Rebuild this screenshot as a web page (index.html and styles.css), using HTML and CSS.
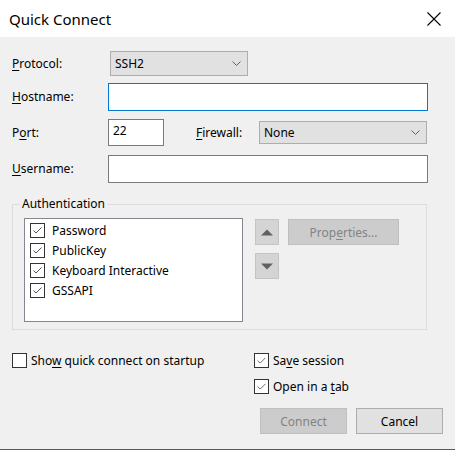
FILE: index.html
```html
<!DOCTYPE html>
<html>
<head>
<meta charset="utf-8">
<link rel="stylesheet" href="styles.css">
</head>
<body>
<div class="dialog">
  <div class="titlebar">
    <span class="title">Quick Connect</span>
    <svg class="close" width="14" height="14" viewBox="0 0 14 14"><path d="M0.5 0.5L13.5 13.5M13.5 0.5L0.5 13.5" stroke="#000" stroke-width="1.1" fill="none"/></svg>
  </div>
  <div class="main">
    <div class="row r-protocol">
      <span class="label"><u>P</u>rotocol:</span>
      <div class="combo combo-protocol"><span>SSH2</span><svg class="chev" width="9" height="5" viewBox="0 0 9 5"><path d="M0.5 0.5L4.5 4.5L8.5 0.5" stroke="#606060" fill="none"/></svg></div>
    </div>
    <div class="row r-host">
      <span class="label"><u>H</u>ostname:</span>
      <div class="input input-focus"></div>
    </div>
    <div class="row r-port">
      <span class="label">P<u>o</u>rt:</span>
      <div class="input input-port">22</div>
      <span class="label fw-label"><u>F</u>irewall:</span>
      <div class="combo combo-fw"><span>None</span><svg class="chev" width="9" height="5" viewBox="0 0 9 5"><path d="M0.5 0.5L4.5 4.5L8.5 0.5" stroke="#606060" fill="none"/></svg></div>
    </div>
    <div class="row r-user">
      <span class="label"><u>U</u>sername:</span>
      <div class="input"></div>
    </div>

    <fieldset class="group">
      <legend>Authentication</legend>
      <div class="group-body">
        <div class="listbox">
          <div class="item"><span class="cb"><svg width="13" height="13" viewBox="0 0 13 13"><path d="M2.5 6.5L5 9L10.5 3.5" stroke="#555" fill="none"/></svg></span><span>Password</span></div>
          <div class="item"><span class="cb"><svg width="13" height="13" viewBox="0 0 13 13"><path d="M2.5 6.5L5 9L10.5 3.5" stroke="#555" fill="none"/></svg></span><span>PublicKey</span></div>
          <div class="item"><span class="cb"><svg width="13" height="13" viewBox="0 0 13 13"><path d="M2.5 6.5L5 9L10.5 3.5" stroke="#555" fill="none"/></svg></span><span>Keyboard Interactive</span></div>
          <div class="item"><span class="cb"><svg width="13" height="13" viewBox="0 0 13 13"><path d="M2.5 6.5L5 9L10.5 3.5" stroke="#555" fill="none"/></svg></span><span>GSSAPI</span></div>
        </div>
        <div class="arrows">
          <div class="btn arrow-btn"><svg width="12" height="7" viewBox="0 0 12 7"><path d="M0 6.5L6 0.5L12 6.5Z" fill="#606060"/></svg></div>
          <div class="btn arrow-btn"><svg width="12" height="7" viewBox="0 0 12 7"><path d="M0 0.5L6 6.5L12 0.5Z" fill="#606060"/></svg></div>
        </div>
        <div class="btn btn-disabled btn-props"><span>Prop<u>e</u>rties...</span></div>
      </div>
    </fieldset>

    <div class="bottom">
      <div class="check"><span class="cb cb-lg"></span><span>Sho<u>w</u> quick connect on startup</span></div>
      <div class="right-col">
        <div class="check"><span class="cb cb-lg"><svg width="15" height="15" viewBox="0 0 15 15"><path d="M3 7.5L6 10.5L12 4.5" stroke="#555" fill="none"/></svg></span><span>Sa<u>v</u>e session</span></div>
        <div class="check check-tab"><span class="cb cb-lg"><svg width="15" height="15" viewBox="0 0 15 15"><path d="M3 7.5L6 10.5L12 4.5" stroke="#555" fill="none"/></svg></span><span>Open in a <u>t</u>ab</span></div>
        <div class="buttons">
          <div class="btn btn-disabled btn-main">Connect</div>
          <div class="btn btn-main">Cancel</div>
        </div>
      </div>
    </div>
  </div>
</div>
</body>
</html>
```

FILE: styles.css
```css
* { box-sizing: border-box; }
html, body { margin: 0; padding: 0; }
body {
  width: 455px;
  height: 450px;
  background: #f0f0f0;
  font-family: "Noto Sans", "DejaVu Sans", sans-serif;
  font-size: 12px;
  color: #000;
  overflow: hidden;
}
.dialog {
  height: 450px;
  border-bottom: 1px solid #5a5a5a;
  display: flex;
  flex-direction: column;
}
u { text-decoration-thickness: 1px; text-underline-offset: 2px; }
.titlebar {
  height: 37px;
  background: #fff;
  display: flex;
  align-items: center;
  justify-content: space-between;
  padding: 0 14px 0 9px;
}
.title { font-size: 15px; line-height: 20px; }
.close { display: block; margin-top: 1px; }
.main { padding: 0 12px; flex: 1; }
.row { display: flex; align-items: center; }
.label { width: 96px; flex: none; line-height: 16px; }
.r-protocol { margin-top: 14px; height: 25px; }
.r-host { margin-top: 7px; height: 28px; }
.r-port { margin-top: 8px; height: 27px; }
.r-user { margin-top: 9px; height: 28px; }
.combo {
  height: 100%;
  background: #e1e1e1;
  border: 1px solid #adadad;
  display: flex;
  align-items: center;
  justify-content: space-between;
  padding: 0 6px 0 4px;
}
.combo-protocol { width: 138px; margin-left: 2px; }
.combo-fw { width: 168px; height: 23px; }
.input {
  width: 320px;
  height: 100%;
  background: #fff;
  border: 1px solid #7a7a7a;
  padding: 3px 4px;
  line-height: 16px;
}
.input-focus { border-color: #0078d7; }
.input-port { width: 56px; }
.fw-label { margin-left: 32px; margin-right: 14px; width: 49px; }

.group {
  margin: 13px 0 0;
  width: 415px;
  height: 134px;
  border: 1px solid #dcdcdc;
  padding: 0 0 0 11px;
  min-width: 0;
}
.group legend {
  padding: 0 2px;
  margin-left: -4px;
  line-height: 16px;
}
.group-body { display: flex; align-items: flex-start; margin-top: 6px; }
.listbox {
  width: 219px;
  height: 104px;
  background: #fff;
  border: 1px solid #828790;
  padding: 1px 0 0 5px;
}
.item { display: flex; align-items: center; height: 20px; }
.cb {
  width: 15px;
  height: 15px;
  border: 1px solid #333;
  background: #fff;
  display: inline-flex;
  align-items: center;
  justify-content: center;
  margin-right: 7px;
  flex: none;
}
.cb svg { display: block; }
.arrows { display: flex; flex-direction: column; gap: 8px; margin: 1px 0 0 12px; }
.btn {
  background: #e1e1e1;
  border: 1px solid #adadad;
  display: flex;
  align-items: center;
  justify-content: center;
}
.btn-disabled { background: #cccccc; border-color: #bfbfbf; color: #838383; }
.arrow-btn { width: 24px; height: 26px; background: #d4d4d4; border-color: #c4c4c4; }
.btn-props { width: 111px; height: 26px; margin: 1px 0 0 9px; }

.bottom { display: flex; justify-content: space-between; margin-top: 22px; }
.check { display: flex; align-items: center; height: 16px; }
.bottom .cb { margin-right: 4px; }
.right-col { width: 189px; display: flex; flex-direction: column; }
.check-tab { margin-top: 10px; }
.buttons { display: flex; justify-content: flex-end; gap: 9px; margin-top: 14px; }
.btn-main { width: 87px; height: 26px; }
```
